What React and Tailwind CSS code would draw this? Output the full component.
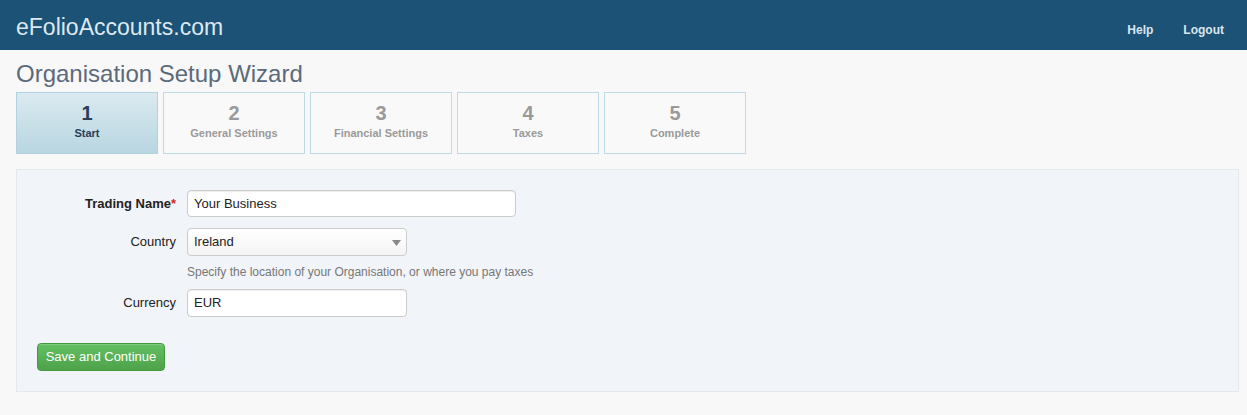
import React from "react";

const steps = [
  { n: "1", label: "Start", active: true },
  { n: "2", label: "General Settings" },
  { n: "3", label: "Financial Settings" },
  { n: "4", label: "Taxes" },
  { n: "5", label: "Complete" },
];

export default function App() {
  return (
    <div
      className="min-h-[415px] bg-[#f8f8f8] text-[13px] text-[#333]"
      style={{ fontFamily: '"Liberation Sans", Arial, sans-serif' }}
    >
      <header className="flex h-[50px] items-center justify-between bg-[#1b5276] pl-4 pr-[23px]">
        <div className="pt-[4px] text-[23px] leading-none text-[#dde8f0]">eFolioAccounts.com</div>
        <nav className="flex gap-[30px] pt-[10px] text-[12px] font-bold text-[#dbe5ee]">
          <span>Help</span>
          <span>Logout</span>
        </nav>
      </header>

      <div className="pb-6 pl-4 pr-[8px]">
        <h1 className="mt-[10px] h-[32px] text-[24px] leading-[28px] text-[#5b6a7a]">
          Organisation Setup Wizard
        </h1>

        <div className="flex gap-[5px]">
          {steps.map((s) => (
            <div
              key={s.n}
              className={
                "flex h-[62px] w-[142px] flex-col items-center border pt-[8px] " +
                (s.active
                  ? "border-[#b2d3de] bg-gradient-to-b from-[#dbeaf0] to-[#b8d6e1] text-[#2a3d58]"
                  : "border-[#bcdbe5] bg-[#f9f9f9] text-[#9a9a9a]")
              }
            >
              <div className="text-[20px] font-bold leading-[24px]">{s.n}</div>
              <div className="mt-[1px] text-[11px] font-bold leading-[14px]">{s.label}</div>
            </div>
          ))}
        </div>

        <div className="mt-[15px] h-[223px] border border-[#e4e9ee] bg-[#f1f4f8] pt-[20px]">
          <div className="flex items-center">
            <label className="w-[159px] text-right font-bold text-[#222]">
              Trading Name<span className="text-[#d22]">*</span>
            </label>
            <div className="ml-[11px] flex h-[27px] w-[329px] items-center rounded-[4px] border border-[#ccc] bg-white px-[6px] text-[#222] shadow-[inset_0_1px_1px_rgba(0,0,0,0.075)]">
              Your Business
            </div>
          </div>

          <div className="mt-[11px] flex items-center">
            <label className="w-[159px] text-right text-[#222]">Country</label>
            <div className="relative ml-[11px] flex h-[28px] w-[220px] items-center rounded-[4px] border border-[#ccc] bg-gradient-to-b from-white to-[#f4f4f4] px-[6px] text-[#222]">
              Ireland
              <svg className="absolute right-[5px] top-[11px]" width="9" height="6" viewBox="0 0 9 6">
                <path d="M0 0 H9 L4.5 6 Z" fill="#888" />
              </svg>
            </div>
          </div>

          <div className="ml-[170px] mt-[8px] text-[12px] leading-[16px] text-[#777]">
            Specify the location of your Organisation, or where you pay taxes
          </div>

          <div className="mt-[9px] flex items-center">
            <label className="w-[159px] text-right text-[#222]">Currency</label>
            <div className="ml-[11px] flex h-[28px] w-[220px] items-center rounded-[4px] border border-[#ccc] bg-white px-[6px] text-[#222] shadow-[inset_0_1px_1px_rgba(0,0,0,0.075)]">
              EUR
            </div>
          </div>

          <div className="ml-[20px] mt-[26px]">
            <button className="h-[28px] w-[128px] rounded-[4px] border border-[#46983f] bg-gradient-to-b from-[#63c062] to-[#4ea24a] text-[13px] text-white shadow-[inset_0_1px_0_rgba(255,255,255,0.2)]">
              Save and Continue
            </button>
          </div>
        </div>
      </div>
    </div>
  );
}
